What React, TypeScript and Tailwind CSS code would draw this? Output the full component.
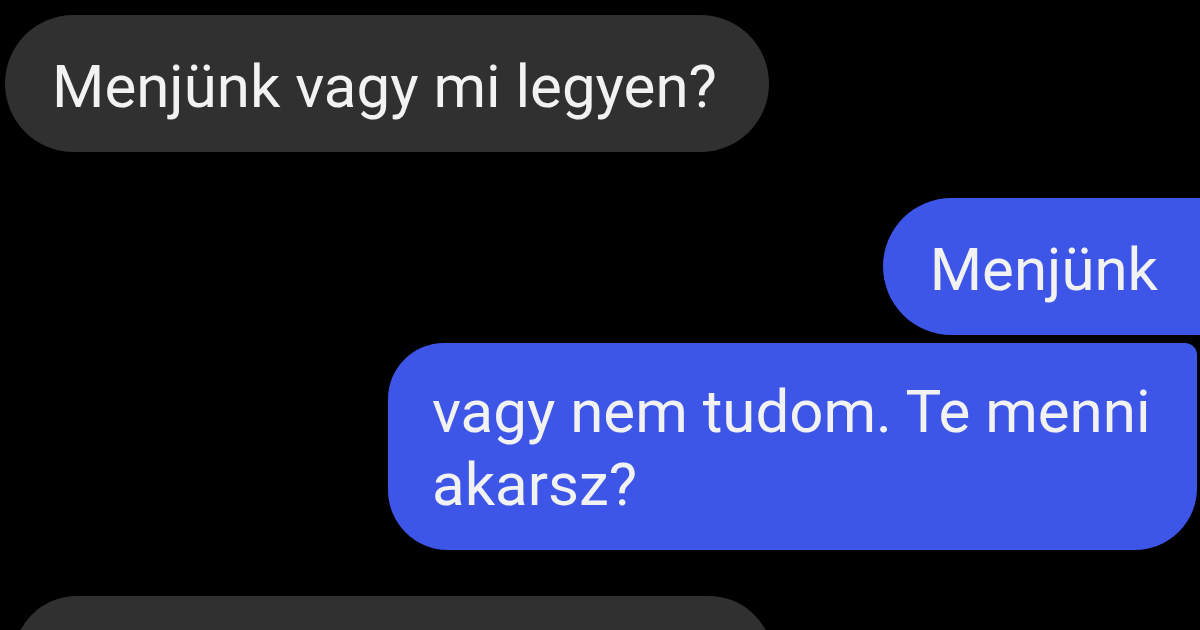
const font = { fontFamily: "Roboto, 'Noto Sans', sans-serif" };

export default function App() {
  return (
    <div
      className="h-[630px] w-[1200px] overflow-hidden bg-black text-[60px] leading-[73px] text-[#f2f2f2]"
      style={font}
    >
      <div className="flex flex-col pt-[15px]">
        {/* incoming */}
        <div className="ml-[5px] self-start rounded-full bg-[#303030] pl-[47px] pr-[52px] pt-[35px] pb-[29px]">
          Menjünk vagy mi legyen?
        </div>

        {/* outgoing group */}
        <div className="mt-[46px] flex flex-col items-end gap-[8px]">
          <div className="rounded-l-full rounded-r-[64px] bg-[#3e56e8] pl-[47px] pr-[42px] pt-[35px] pb-[29px]">
            Menjünk
          </div>
          <div className="mr-[3px] w-[809px] rounded-tl-[56px] rounded-tr-[12px] rounded-br-[62px] rounded-bl-[60px] bg-[#3e56e8] pl-[44px] pr-[30px] pt-[32px] pb-[29px]">
            vagy nem tudom. Te menni akarsz?
          </div>
        </div>

        {/* incoming, cut off */}
        <div className="mt-[46px] ml-[13px] h-[137px] w-[760px] rounded-t-[64px] bg-[#303030]" />
      </div>
    </div>
  );
}
